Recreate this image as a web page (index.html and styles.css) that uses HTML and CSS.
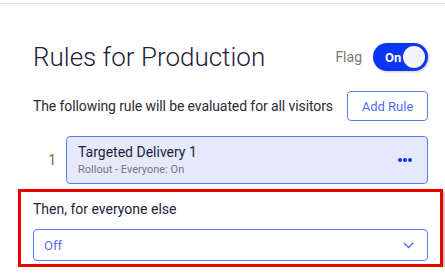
FILE: index.html
```html
<!DOCTYPE html>
<html lang="en">
<head>
    <meta charset="UTF-8">
    <meta name="viewport" content="width=device-width, initial-scale=1.0">
    <title>Rules for Production</title>
    <link rel="stylesheet" href="styles.css">
</head>

<body>
    <div class="topline"></div>

    <div class="panel">
        <div class="title-row">
            <h1>Rules for Production</h1>
            <div class="flag">
                <span class="flag-label">Flag</span>
                <button class="toggle">
                    <span class="toggle-text">On</span>
                    <span class="knob"></span>
                </button>
            </div>
        </div>

        <div class="desc-row">
            <p>The following rule will be evaluated for all visitors</p>
            <button class="add-btn">Add Rule</button>
        </div>

        <div class="rule-row">
            <span class="rule-num">1</span>
            <div class="rule-card">
                <div>
                    <div class="rule-name">Targeted Delivery 1</div>
                    <div class="rule-meta">Rollout - Everyone: On</div>
                </div>
                <span class="dots"><i></i><i></i><i></i></span>
            </div>
        </div>

        <div class="fallback">
            <div class="fallback-label">Then, for everyone else</div>
            <div class="select">
                <span>Off</span>
                <svg width="11" height="7" viewBox="0 0 11 7">
                    <path d="M1 1 L5.5 5.5 L10 1" fill="none" stroke="#4f6ef7" stroke-width="1.4"/>
                </svg>
            </div>
        </div>
    </div>
</body>
</html>
```

FILE: styles.css
```css
body {
    margin: 0;
    background: #fff;
    font-family: Roboto, "Liberation Sans", sans-serif;
    color: #22223a;
}

.topline {
    margin-top: 3px;
    height: 1px;
    background: #dcdcdc;
}

.panel {
    padding: 39px 17px 0 33px;
}

.title-row {
    display: flex;
    justify-content: space-between;
    align-items: center;
    height: 28px;
}

h1 {
    margin: 0;
    font-size: 26px;
    font-weight: 300;
    color: #1d1d38;
}

.flag {
    display: flex;
    align-items: center;
    gap: 11px;
}

.flag-label {
    font-size: 14px;
    color: #777;
}

.toggle {
    display: flex;
    align-items: center;
    justify-content: space-between;
    width: 55px;
    height: 28px;
    padding: 0 3px 0 12px;
    border: none;
    border-radius: 14px;
    background: #0a36f2;
    box-shadow: 1px 1px 3px rgba(0, 0, 0, 0.2);
}

.toggle-text {
    color: #fff;
    font-family: Roboto, sans-serif;
    font-size: 13px;
    font-weight: 700;
}

.knob {
    width: 22px;
    height: 22px;
    border-radius: 50%;
    background: #f4f4f6;
}

.desc-row {
    display: flex;
    justify-content: space-between;
    align-items: center;
    margin-top: 20px;
}

.desc-row p {
    margin: 0;
    font-size: 14px;
    letter-spacing: -0.1px;
    color: #2a2a3a;
}

.add-btn {
    width: 81px;
    height: 30px;
    border: 1px solid #5a7cf6;
    border-radius: 4px;
    background: #fff;
    color: #4f6ef7;
    font-family: inherit;
    font-size: 13px;
}

.rule-row {
    display: flex;
    align-items: center;
    gap: 10px;
    margin-top: 15px;
}

.rule-num {
    width: 23px;
    text-align: right;
    font-size: 14px;
    color: #7a6a40;
}

.rule-card {
    flex: 1;
    display: flex;
    justify-content: space-between;
    align-items: center;
    height: 48px;
    box-sizing: border-box;
    padding: 0 15px 0 11px;
    border: 1px solid #5a7cf6;
    border-radius: 4px;
    background: #e5e9fc;
}

.rule-name {
    font-size: 14px;
    color: #1d1d38;
}

.rule-meta {
    margin-top: 3px;
    font-size: 11px;
    color: #777;
}

.dots {
    display: flex;
    gap: 1px;
}

.dots i {
    width: 4px;
    height: 4px;
    border-radius: 50%;
    background: #0a36f2;
}

.fallback {
    margin: 5px -15px 0 -15px;
    padding: 9px 12px 3px 12px;
    border: 3px solid #ec0000;
    box-shadow: 2px 2px 3px rgba(0, 0, 0, 0.3);
}

.fallback-label {
    font-size: 14px;
    color: #22223a;
}

.select {
    display: flex;
    justify-content: space-between;
    align-items: center;
    height: 32px;
    box-sizing: border-box;
    margin-top: 12px;
    padding: 0 13px 0 10px;
    border: 1px solid #5a7cf6;
    border-radius: 4px;
    font-size: 13px;
    color: #5a6cf2;
}
```
